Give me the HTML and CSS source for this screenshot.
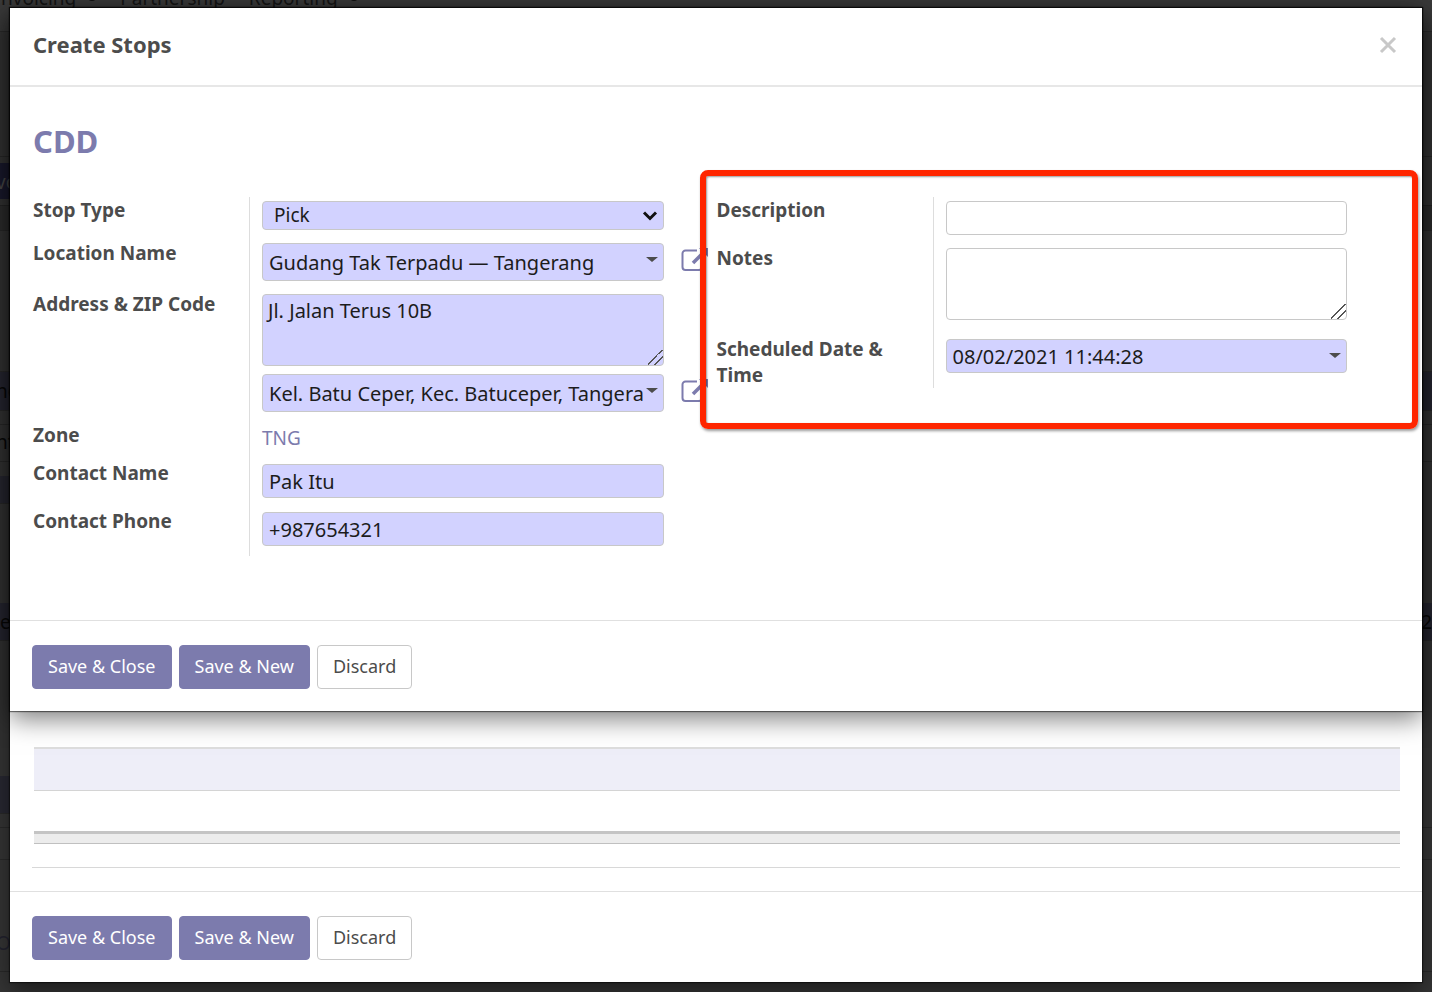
FILE: index.html
```html
<!DOCTYPE html>
<html lang="en">
<head>
<meta charset="utf-8">
<title>Create Stops</title>
<link rel="stylesheet" href="styles.css">
</head>
<body>
<div class="backdrop" aria-hidden="true">
  <div class="menu"><span>nvoicing</span><i class="dot"></i><span>Partnership</span><span>Reporting</span><i class="dot"></i></div>
  <div class="strip crumbs"></div>
  <div class="strip status"><span class="chip">vo</span></div>
  <div class="strip sheet-edge"></div>
  <div class="strip space-a"></div>
  <div class="strip tint head-a">ne</div>
  <div class="strip space-b"></div>
  <div class="strip row-a">nt</div>
  <div class="strip space-c"></div>
  <div class="strip half half-a"></div>
  <div class="strip space-d"></div>
  <div class="strip tint head-b"><span>e</span><span>2</span></div>
  <div class="strip space-e"></div>
  <div class="strip half half-b"></div>
  <div class="strip space-f"></div>
  <div class="strip row-b"></div>
  <div class="strip row-c">O</div>
</div>

<main class="stack">
  <section class="dialog under" aria-label="Parent record">
    <div class="under-body">
      <div class="band"></div>
      <div class="total"></div>
      <div class="rule"></div>
    </div>
    <footer class="footer">
      <button type="button" class="btn primary">Save &amp; Close</button>
      <button type="button" class="btn primary">Save &amp; New</button>
      <button type="button" class="btn plain">Discard</button>
    </footer>
  </section>

  <section class="dialog top" role="dialog" aria-labelledby="dialog-title">
    <header class="header">
      <h1 class="title" id="dialog-title">Create Stops</h1>
      <button type="button" class="close" aria-label="Close">
        <svg width="18" height="18" viewBox="0 0 18 18"><path d="M2 2 16 16M16 2 2 16" stroke="#c8c8c8" stroke-width="3" fill="none"/></svg>
      </button>
    </header>

    <form class="body">
      <h2 class="name">CDD</h2>
      <div class="groups">
        <div class="group">
          <div class="row">
            <label class="label" for="stop-type">Stop Type</label>
            <div class="cell"><div class="control">
              <select class="field required select" id="stop-type"><option>Pick</option></select>
              <svg class="chevron" width="16" height="12" viewBox="0 0 16 12"><path d="M2 2.500 8 8.500 14 2.500" stroke="#111" stroke-width="3" fill="none"/></svg>
            </div></div>
          </div>
          <div class="row tight">
            <label class="label" for="location">Location Name</label>
            <div class="cell"><div class="control">
              <input class="field required relation" id="location" type="text" value="Gudang Tak Terpadu — Tangerang">
              <i class="caret"></i>
              <button type="button" class="external" aria-label="Open location">
                <svg width="28" height="24" viewBox="0 0 28 24" fill="none" stroke="#7c7bad"><path d="M16 2.500H4.500a3 3 0 0 0-3 3V19a3 3 0 0 0 3 3H18a3 3 0 0 0 3-3V15" stroke-width="2"/><path d="M12 15 24 3" stroke-width="3.500"/><path d="M18 0h9v9z" fill="#7c7bad" stroke="none"/></svg>
              </button>
            </div></div>
          </div>
          <div class="row tight">
            <label class="label" for="address">Address &amp; ZIP Code</label>
            <div class="cell">
              <div class="control"><textarea class="field required area" id="address">Jl. Jalan Terus 10B</textarea></div>
              <div class="control">
                <input class="field required relation" type="text" aria-label="ZIP Code" value="Kel. Batu Ceper, Kec. Batuceper, Tangera">
                <i class="caret"></i>
                <button type="button" class="external" aria-label="Open ZIP code">
                  <svg width="28" height="24" viewBox="0 0 28 24" fill="none" stroke="#7c7bad"><path d="M16 2.500H4.500a3 3 0 0 0-3 3V19a3 3 0 0 0 3 3H18a3 3 0 0 0 3-3V15" stroke-width="2"/><path d="M12 15 24 3" stroke-width="3.500"/><path d="M18 0h9v9z" fill="#7c7bad" stroke="none"/></svg>
                </button>
              </div>
            </div>
          </div>
          <div class="row">
            <span class="label">Zone</span>
            <div class="cell"><a class="link" href="#zone">TNG</a></div>
          </div>
          <div class="row">
            <label class="label" for="contact">Contact Name</label>
            <div class="cell"><input class="field required" id="contact" type="text" value="Pak Itu"></div>
          </div>
          <div class="row">
            <label class="label" for="phone">Contact Phone</label>
            <div class="cell"><input class="field required" id="phone" type="tel" value="+987654321"></div>
          </div>
        </div>

        <div class="group">
          <div class="row">
            <label class="label" for="description">Description</label>
            <div class="cell"><input class="field" id="description" type="text"></div>
          </div>
          <div class="row tight spaced">
            <label class="label" for="notes">Notes</label>
            <div class="cell"><textarea class="field area" id="notes"></textarea></div>
          </div>
          <div class="row tight">
            <label class="label" for="schedule">Scheduled Date &amp; Time</label>
            <div class="cell"><div class="control">
              <input class="field required" id="schedule" type="text" value="08/02/2021 11:44:28">
              <i class="caret"></i>
            </div></div>
          </div>
          <div class="marker"></div>
        </div>
      </div>
    </form>

    <footer class="footer">
      <button type="button" class="btn primary">Save &amp; Close</button>
      <button type="button" class="btn primary">Save &amp; New</button>
      <button type="button" class="btn plain">Discard</button>
    </footer>
  </section>
</main>
</body>
</html>
```
FILE: styles.css
```css
* { box-sizing: border-box; }

body {
  margin: 0;
  position: relative;
  min-height: 100vh;
  overflow-x: hidden;
  background: #333;
  color: #4c4c4c;
  font-family: "Noto Sans", "Open Sans", sans-serif;
  font-size: 19px;
  line-height: 26px;
}

button, input, select, textarea { font: inherit; color: inherit; }

/* Dimmed page behind the dialogs */
.backdrop {
  position: absolute;
  inset: 0;
  overflow: hidden;
  display: flex;
  flex-direction: column;
  background: #353535;
  color: #080808;
}
.menu {
  display: flex;
  align-items: flex-end;
  gap: 24px;
  height: 32px;
  padding: 0 0 20px 1px;
  background: #3a3a3a;
  color: #141414;
  border-bottom: 1px solid #2b2b2b;
  flex: none;
}
.dot { width: 8px; height: 6px; margin: 0 0 10px -12px; border-radius: 0 0 4px 4px; background: #111; }
.strip { flex: none; border-bottom: 1px solid #292929; text-indent: -4px; }
.crumbs { height: 125px; }
.status { height: 49px; padding-top: 6px; border-bottom-color: #252525; }
.chip { display: block; width: 60px; height: 36px; padding-top: 6px; background: #1a1a2e; color: #4a4a4a; }
.sheet-edge { height: 25px; background: #2e2e2e; }
.space-a { height: 141px; }
.tint { background: #272732; }
.head-a { height: 39px; padding-top: 6px; }
.space-b { height: 14px; }
.row-a { height: 37px; padding-top: 4px; }
.space-c { height: 14px; border: 0; }
.half { width: 50%; background: #282832; }
.half-a { height: 28px; }
.space-d { height: 99px; border: 0; }
.head-b { height: 38px; padding: 6px 0 0; display: flex; justify-content: space-between; text-indent: 0; }
.space-e { height: 135px; border: 0; }
.half-b { height: 38px; }
.space-f { height: 14px; }
.row-b { height: 32px; }
.row-c { height: 112px; padding-top: 70px; color: #22222e; }

/* Dialogs share one grid cell, the newest on top */
.stack {
  position: relative;
  display: grid;
  min-height: 100vh;
  padding: 8px 10px 10px;
}
.dialog {
  grid-area: 1 / 1;
  display: flex;
  flex-direction: column;
  min-width: 0;
  background: #fff;
  box-shadow: 0 0 1px 1px rgba(0, 0, 0, .5), 0 8px 24px rgba(0, 0, 0, .5);
}
.top { align-self: start; }
.under { justify-content: flex-end; }

.header {
  display: flex;
  align-items: center;
  justify-content: space-between;
  height: 79px;
  padding: 0 23px 4px;
  border-bottom: 2px solid #e7e7e7;
}
.title { margin: 0; padding-bottom: 2px; font-size: 22px; line-height: 28px; }
.close { display: flex; padding: 2px; border: 0; background: none; }

.body { padding: 34px 22px 64px 23px; }
.name { margin: 0 0 36px; font-size: 31px; line-height: 40px; color: #7c7bad; }
.groups { display: grid; grid-template-columns: 1fr 1fr; align-items: start; }
.group { position: relative; }
.row { display: grid; grid-template-columns: 216px 1fr; }
.label { padding-right: 20px; font-weight: 700; font-size: 19px; line-height: 26px; }
.cell {
  display: flex;
  flex-direction: column;
  gap: 8px;
  min-width: 0;
  padding: 4px 53px 10px 12px;
  border-left: 1px solid #ddd;
}
.tight .cell { padding-top: 3px; }
.spaced .cell { padding-bottom: 16px; }
.control { position: relative; display: flex; }
.field {
  display: block;
  width: 100%;
  height: 34px;
  margin: 0;
  padding: 0 6px;
  border: 1px solid #c8c8c8;
  border-radius: 4px;
  background: #fff;
  color: #1c1c1c;
  font-size: 20px;
  line-height: 26px;
}
.required { background: #d2d2ff; }
.select { height: 29px; padding: 0 11px 2px; font-size: 19px; appearance: none; }
.relation { height: 38px; padding-right: 17px; }
.area { height: 72px; padding: 3px 5px; resize: vertical; }
.area::-webkit-resizer {
  background: linear-gradient(135deg, transparent 44%, #555 44% 50%, transparent 50% 68%, #555 68% 74%, transparent 74%);
}
.chevron { position: absolute; right: 6px; top: 9px; pointer-events: none; }
.caret {
  position: absolute;
  right: 6px;
  top: 14px;
  border: 6px solid transparent;
  border-top: 5px solid #4c4c4c;
  border-bottom: 0;
}
.external { position: absolute; left: calc(100% + 17px); top: 5px; display: flex; padding: 0; border: 0; background: none; }
.link { color: #7c7bad; line-height: 24px; text-decoration: none; }

/* Highlight around the right-hand group */
.marker {
  position: absolute;
  inset: -27px -18px -41px -17px;
  border: 6px solid #ff2600;
  border-radius: 8px;
  box-shadow: 1px 2px 3px rgba(0, 0, 0, .4), inset 1px 1px 2px rgba(0, 0, 0, .4);
  pointer-events: none;
}

.footer { display: flex; gap: 7px; padding: 24px 22px 22px; border-top: 1px solid #e0e0e0; }
.btn { height: 44px; padding: 0 15px 2px; border: 1px solid #7c7bad; border-radius: 4px; font-size: 18px; line-height: 26px; white-space: nowrap; }
.primary { background: #7c7bad; color: #fff; }
.plain { border-color: #c8c8c8; background: #fff; }

.under-body { display: flex; flex-direction: column; padding: 0 22px 23px; }
.band { height: 44px; margin: 0 0 40px 2px; background: #eeeef8; border-top: 2px solid #ddd; border-bottom: 1px solid #d4d4d4; }
.total { height: 13px; margin: 0 0 23px 2px; background: #ececec; border-top: 3px solid #c4c4c4; border-bottom: 1px solid #c0c0c0; }
.rule { height: 1px; background: #d8d8d8; }
```
